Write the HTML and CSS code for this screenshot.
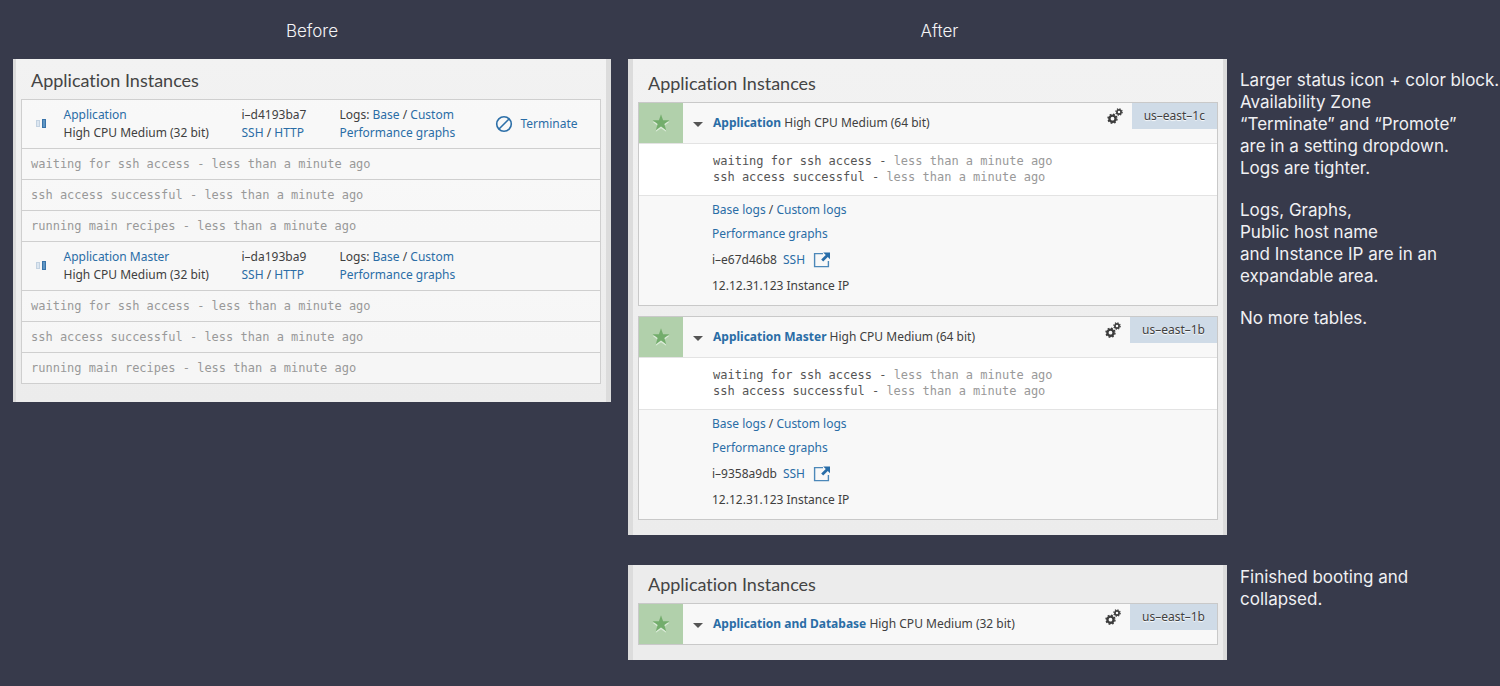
FILE: index.html
```html
<!DOCTYPE html>
<html lang="en">
<head>
<meta charset="utf-8">
<meta name="viewport" content="width=device-width, initial-scale=1">
<title>Application Instances</title>
<link rel="stylesheet" href="styles.css">
</head>
<body>
<svg class="sprite" aria-hidden="true">
  <symbol id="star" viewBox="0 0 20 20">
    <path class="star-shadow" d="M10 2.8l2.1 6h6.3l-5 3.9 1.8 6.1-5.2-3.6-5.2 3.6 1.8-6.1-5-3.9h6.3z"/>
    <path class="star-face" d="M10 1.2l2.1 6h6.3l-5 3.9 1.8 6.1-5.2-3.6-5.2 3.6 1.8-6.1-5-3.9h6.3z"/>
  </symbol>
  <symbol id="gears" viewBox="0 0 16 16">
    <g fill="none" stroke="#3c3c3c">
      <circle cx="5.5" cy="10.7" r="3.1" stroke-width="2.4"/>
      <circle cx="5.5" cy="10.7" r="4.5" stroke-width="1.4" stroke-dasharray="1.767 1.767"/>
      <circle cx="12" cy="4" r="2.1" stroke-width="1.7"/>
      <circle cx="12" cy="4" r="3.2" stroke-width="1.2" stroke-dasharray="1.257 1.257"/>
    </g>
  </symbol>
  <symbol id="external" viewBox="0 0 18 16">
    <path d="M10 1.6H1.6v13h13.8V9" fill="none" stroke="#4c88b9" stroke-width="1.4"/>
    <path d="M10.2 0.4H17v6.8l-2.2-2.2-4.6 4.6-2-2 4.6-4.6z" fill="#286da8"/>
  </symbol>
  <symbol id="booting" viewBox="0 0 12 12">
    <rect x="1.5" y="2.5" width="3" height="6" fill="#dce6f0" stroke="#c3d2e1"/>
    <rect x="7.5" y="1.5" width="3" height="8" fill="#6096c3" stroke="#3a74aa"/>
  </symbol>
</svg>

<main class="board">
  <section class="before">
    <h1 class="label">Before</h1>
    <div class="panel panel-before">
      <h2 class="panel-title">Application Instances</h2>
      <table class="instances">
        <colgroup><col class="c-status"><col class="c-name"><col class="c-id"><col class="c-logs"><col></colgroup>
        <tbody>
          <tr class="instance">
            <td class="status"><svg width="12" height="12" role="img" aria-label="Booting"><use href="#booting"/></svg></td>
            <td><a href="#app">Application</a><br>High CPU Medium (32 bit)</td>
            <td>i–d4193ba7<br><a href="#ssh">SSH</a> / <a href="#http">HTTP</a></td>
            <td>Logs: <a href="#base">Base</a> / <a href="#custom">Custom</a><br><a href="#graphs">Performance graphs</a></td>
            <td><button class="terminate" type="button"><svg width="18" height="18" viewBox="0 0 18 18" aria-hidden="true"><g fill="none" stroke="#2c6fa8" stroke-width="1.6"><circle cx="9" cy="9" r="7.3"/><path d="M4 14L14 4"/></g></svg><span>Terminate</span></button></td>
          </tr>
          <tr class="event"><td colspan="5">waiting for ssh access - less than a minute ago</td></tr>
          <tr class="event"><td colspan="5">ssh access successful - less than a minute ago</td></tr>
          <tr class="event"><td colspan="5">running main recipes - less than a minute ago</td></tr>
          <tr class="instance">
            <td class="status"><svg width="12" height="12" role="img" aria-label="Booting"><use href="#booting"/></svg></td>
            <td><a href="#master">Application Master</a><br>High CPU Medium (32 bit)</td>
            <td>i–da193ba9<br><a href="#ssh">SSH</a> / <a href="#http">HTTP</a></td>
            <td>Logs: <a href="#base">Base</a> / <a href="#custom">Custom</a><br><a href="#graphs">Performance graphs</a></td>
            <td></td>
          </tr>
          <tr class="event"><td colspan="5">waiting for ssh access - less than a minute ago</td></tr>
          <tr class="event"><td colspan="5">ssh access successful - less than a minute ago</td></tr>
          <tr class="event"><td colspan="5">running main recipes - less than a minute ago</td></tr>
        </tbody>
      </table>
    </div>
  </section>

  <section class="after">
    <h1 class="label label-after">After</h1>
    <div class="panel panel-after">
      <h2 class="panel-title">Application Instances</h2>
      <article class="card">
        <header class="card-head">
          <span class="badge"><svg width="20" height="20" role="img" aria-label="Running"><use href="#star"/></svg></span>
          <button class="toggle" type="button" aria-label="Collapse" aria-expanded="true"></button>
          <h3 class="name"><a href="#app">Application</a> High CPU Medium (64 bit)</h3>
          <button class="settings" type="button" aria-label="Settings"><svg width="16" height="16"><use href="#gears"/></svg></button>
          <span class="zone">us–east–1c</span>
        </header>
        <ul class="log">
          <li>waiting for ssh access - <time>less than a minute ago</time></li>
          <li>ssh access successful - <time>less than a minute ago</time></li>
        </ul>
        <ul class="details">
          <li><a href="#base">Base logs</a> / <a href="#custom">Custom logs</a></li>
          <li><a href="#graphs">Performance graphs</a></li>
          <li class="host">i–e67d46b8 <a href="#ssh">SSH<svg class="ext" width="18" height="16" aria-hidden="true"><use href="#external"/></svg></a></li>
          <li>12.12.31.123 Instance IP</li>
        </ul>
      </article>
      <article class="card">
        <header class="card-head">
          <span class="badge"><svg width="20" height="20" role="img" aria-label="Running"><use href="#star"/></svg></span>
          <button class="toggle" type="button" aria-label="Collapse" aria-expanded="true"></button>
          <h3 class="name"><a href="#master">Application Master</a> High CPU Medium (64 bit)</h3>
          <button class="settings" type="button" aria-label="Settings"><svg width="16" height="16"><use href="#gears"/></svg></button>
          <span class="zone">us–east–1b</span>
        </header>
        <ul class="log">
          <li>waiting for ssh access - <time>less than a minute ago</time></li>
          <li>ssh access successful - <time>less than a minute ago</time></li>
        </ul>
        <ul class="details">
          <li><a href="#base">Base logs</a> / <a href="#custom">Custom logs</a></li>
          <li><a href="#graphs">Performance graphs</a></li>
          <li class="host">i–9358a9db <a href="#ssh">SSH<svg class="ext" width="18" height="16" aria-hidden="true"><use href="#external"/></svg></a></li>
          <li>12.12.31.123 Instance IP</li>
        </ul>
      </article>
    </div>
    <aside class="notes">
      <p>Larger status icon + color block.<br>Availability Zone<br>“Terminate” and “Promote”<br>are in a setting dropdown.<br>Logs are tighter.</p>
      <p>Logs, Graphs,<br>Public host name<br>and Instance IP are in an<br>expandable area.</p>
      <p>No more tables.</p>
    </aside>

    <div class="panel panel-booted">
      <h2 class="panel-title">Application Instances</h2>
      <article class="card">
        <header class="card-head">
          <span class="badge"><svg width="20" height="20" role="img" aria-label="Running"><use href="#star"/></svg></span>
          <button class="toggle" type="button" aria-label="Expand" aria-expanded="false"></button>
          <h3 class="name"><a href="#db">Application and Database</a> High CPU Medium (32 bit)</h3>
          <button class="settings" type="button" aria-label="Settings"><svg width="16" height="16"><use href="#gears"/></svg></button>
          <span class="zone">us–east–1b</span>
        </header>
      </article>
    </div>
    <aside class="notes notes-booted">
      <p>Finished booting and<br>collapsed.</p>
    </aside>
  </section>
</main>
</body>
</html>
```

FILE: styles.css
```css
* { box-sizing: border-box; }

body {
  margin: 0;
  background: #373a4b;
  color: #404040;
  font: 12px/18px "Noto Sans", "Open Sans", sans-serif;
}

h1, h2, h3, p, ul { margin: 0; padding: 0; font-weight: 400; }
ul { list-style: none; }
a { color: #2a6da6; text-decoration: none; }
svg { display: block; }
button { padding: 0; border: 0; background: none; font: inherit; cursor: pointer; }
.sprite { position: absolute; width: 0; height: 0; }

.board {
  display: grid;
  grid-template-columns: minmax(0, 598fr) minmax(0, 872fr);
  column-gap: 17px;
  align-items: start;
  padding: 20px 0 26px 13px;
}

.after {
  display: grid;
  grid-template-columns: minmax(0, 599fr) minmax(0, 260fr);
  column-gap: 13px;
}

.label {
  height: 39px;
  color: #f4f4f6;
  font: 300 17px/22px Inter, "Liberation Sans", sans-serif;
  text-align: center;
}
.label-after { padding-left: 24px; }
.label-after + .panel { grid-column: 1; }

.panel {
  border: solid #dcdcdc;
  border-width: 0 4px 0 5px;
  background: linear-gradient(#f2f2f2, #ececec);
}
.panel-before { border-width: 0 5px 0 3px; padding: 10px 5px 18px; }
.panel-after { padding: 13px 5px 15px; }
.panel-booted { margin-top: 30px; padding: 8px 5px 15px; background: #ececec; }

.panel-title {
  margin-bottom: 8px;
  padding: 0 10px;
  color: #444;
  font: 400 18px/22px Lato, sans-serif;
  font-variant-ligatures: none;
}

.instances {
  width: 100%;
  table-layout: fixed;
  border: 1px solid #cfcfcf;
  border-collapse: collapse;
  background: rgba(255, 255, 255, 0.5);
}
.instances td { padding: 0; border: solid #cfcfcf; border-width: 1px 0; white-space: nowrap; }
.c-status { width: 42px; }
.c-name { width: 178px; }
.c-id { width: 98px; }
.c-logs { width: 155px; }
.instance td { height: 49px; }
.instances .status { padding-left: 13px; }
.event td { height: 31px; padding-left: 9px; color: #999; font: 12px/18px "DejaVu Sans Mono", monospace; }
.terminate { display: flex; align-items: center; gap: 8px; color: #2a6da6; }

.card { border: 1px solid #c9c9c9; background: #f8f8f8; }
.card + .card { margin-top: 10px; }

.card-head { display: flex; height: 40px; }
.badge {
  display: flex;
  align-items: center;
  justify-content: center;
  width: 44px;
  background: #b1d0ab;
}
.star-shadow { fill: #dcebd9; }
.star-face { fill: #73ad6c; }
.toggle { display: flex; align-items: center; justify-content: center; width: 30px; padding-top: 3px; }
.toggle::before {
  content: "";
  border: solid transparent;
  border-width: 5px 5px 0;
  border-top-color: #555;
}
.name { flex: 1; font-size: 12px; line-height: 40px; white-space: nowrap; }
.name a { font-weight: 700; }
.settings { align-self: flex-start; margin: 5px 9px 0 0; }
.zone {
  height: 26px;
  padding: 0 12px;
  background: #cfdbe7;
  line-height: 26px;
  text-shadow: 0 1px 1px #fff;
}

.log {
  padding: 9px 0 10px 74px;
  border: solid #e3e3e3;
  border-width: 1px 0;
  background: #fff;
  color: #555;
  font: 12px/16px "DejaVu Sans Mono", monospace;
}
.log time { color: #999; }

.details { padding: 2px 0 7px 73px; line-height: 24px; }
.host, .host a { display: flex; align-items: center; }
.host { height: 28px; gap: 6px; }
.ext { margin-left: 8px; }

.notes {
  padding-top: 10px;
  color: #f0f0f3;
  font: 300 17px/22px Inter, "Liberation Sans", sans-serif;
  white-space: nowrap;
}
.notes p + p { margin-top: 20px; }
.notes-booted { padding-top: 31px; }
```
